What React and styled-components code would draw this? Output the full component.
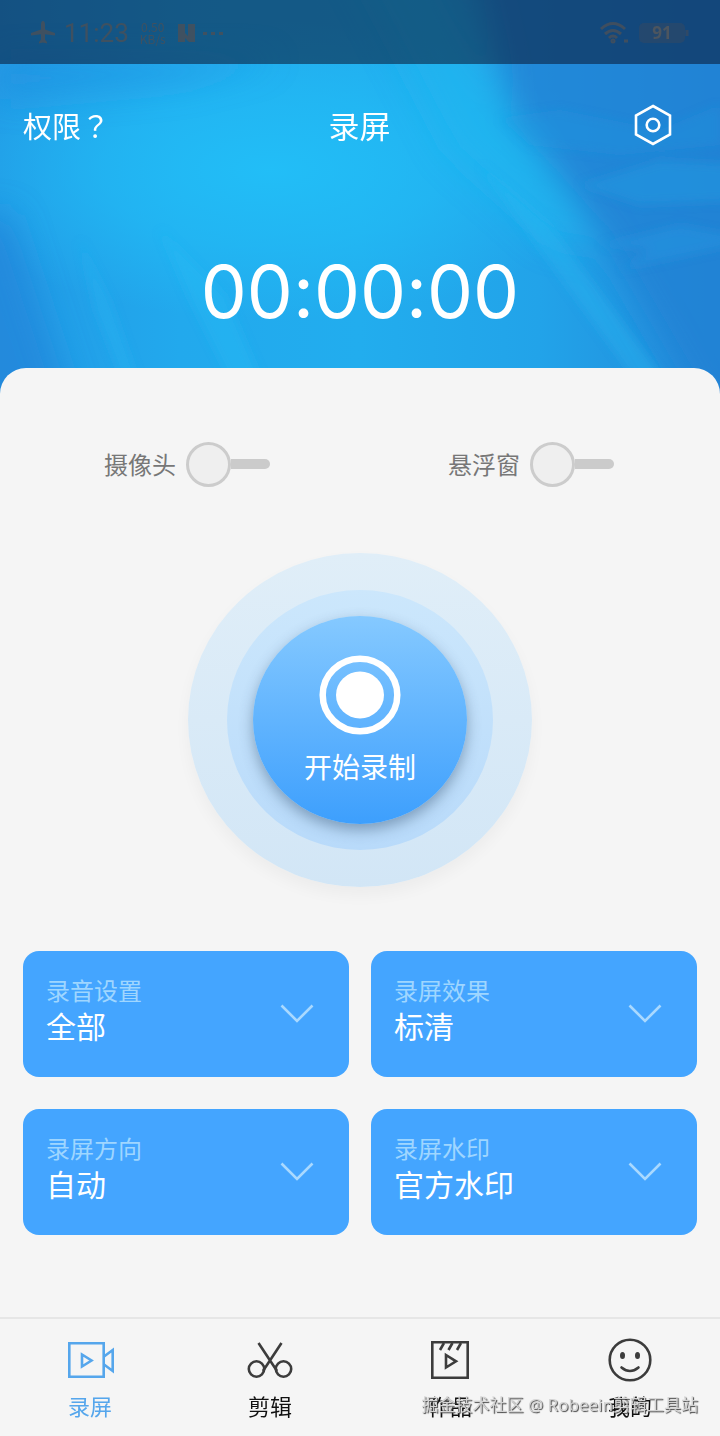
import { useState } from "react";
import styled, { createGlobalStyle } from "styled-components";

const GlobalStyle = createGlobalStyle`
  *, *::before, *::after {
    box-sizing: border-box;
  }
  body {
    margin: 0;
    background-color: #f5f5f5;
    font-family: "Noto Sans CJK SC", "Noto Sans", sans-serif;
  }
  button {
    padding: 0;
    border: none;
    background: none;
    color: inherit;
    font: inherit;
    cursor: pointer;
  }
`

const Page = styled.div`
  min-height: 100vh;
  display: flex;
  flex-direction: column;
  position: relative;
`

const Sea = styled.svg`
  position: absolute;
  top: 0;
  left: 0;
  width: 100%;
  height: 400px;
`

const StatusBar = styled.div`
  position: relative;
  height: 64px;
  padding: 2px 30px 0;
  display: flex;
  align-items: center;
  justify-content: space-between;
  background-color: rgba(10, 22, 50, 0.55);
  color: #4a5058;
`

const StatusGroup = styled.div`
  display: flex;
  align-items: center;
  gap: 8px;
  opacity: 0.8;
`

const Clock = styled.span`
  font-family: Roboto, sans-serif;
  font-size: 26px;
  line-height: 32px;
`

const NetSpeed = styled.span`
  width: 32px;
  font-size: 12px;
  line-height: 12px;
  text-align: center;
`

const Header = styled.header`
  position: relative;
  height: 124px;
  padding: 0 48px 2px 23px;
  display: grid;
  grid-template-columns: 1fr auto 1fr;
  align-items: center;
  color: #fff;
`

const HeaderLink = styled.button`
  && {
    justify-self: start;
    font-family: "Noto Sans CJK TC", sans-serif;
    font-size: 29px;
    line-height: 40px;
  }
`

const Title = styled.h1`
  margin: 0;
  padding-left: 24px;
  font-size: 31px;
  font-weight: 400;
  line-height: 40px;
`

const SettingButton = styled.button`
  justify-self: end;
  display: flex;
`

const Timer = styled.time`
  position: relative;
  height: 180px;
  padding-top: 52px;
  color: #fff;
  font-family: Inter, sans-serif;
  font-size: 73px;
  font-variant-ligatures: no-contextual;
  line-height: 104px;
  text-align: center;
`

const Panel = styled.main`
  position: relative;
  flex: 1;
  padding: 64px 23px 82px;
  border-radius: 26px 26px 0 0;
  background-color: #f5f5f5;
`

const SwitchRow = styled.div`
  padding: 0 9px 0 7px;
  display: grid;
  grid-template-columns: 1fr 1fr;
  column-gap: 30px;
`

const SwitchLabel = styled.label`
  display: flex;
  align-items: center;
  justify-content: center;
  gap: 10px;
  color: #777;
  font-size: 24px;
  line-height: 32px;
`

const Switch = styled.input`
  appearance: none;
  width: 84px;
  height: 64px;
  margin: 0;
  display: flex;
  align-items: center;
  cursor: pointer;

  &::before {
    content: "";
    width: 45px;
    height: 45px;
    border: 3px solid #ccc;
    border-radius: 50%;
    background-color: #efefef;
  }
  &::after {
    content: "";
    flex: 1;
    height: 10px;
    border-radius: 0 5px 5px 0;
    background-color: #cbcbcb;
  }
  &:checked {
    flex-direction: row-reverse;
  }
  &:checked::before {
    border-color: #44a5ff;
  }
`

const Outer = styled.div`
  width: 344px;
  height: 334px;
  margin: 57px auto 64px;
  display: flex;
  align-items: center;
  justify-content: center;
  border-radius: 50%;
  background: linear-gradient(#e0eef8, #d2e6f6);
  box-shadow: 0 8px 16px rgba(0, 0, 0, 0.04);
`

const Inner = styled.div`
  width: 266px;
  height: 260px;
  display: flex;
  align-items: center;
  justify-content: center;
  border-radius: 50%;
  background: linear-gradient(#cce7fc, #b8dafa);
`

const RecordButton = styled.button`
  && {
    width: 214px;
    height: 208px;
    display: flex;
    flex-direction: column;
    align-items: center;
    justify-content: center;
    gap: 11px;
    border-radius: 50%;
    background: linear-gradient(#85c9ff, #3d9ffd);
    box-shadow: 0 6px 14px rgba(50, 80, 110, 0.45);
    color: #fff;
    font-size: 28px;
    line-height: 40px;
  }
`

const Cards = styled.div`
  display: grid;
  grid-template-columns: 1fr 1fr;
  gap: 32px 22px;
`

const Card = styled.button`
  && {
    height: 126px;
    padding: 0 35px 0 23px;
    display: flex;
    align-items: center;
    justify-content: space-between;
    border-radius: 16px;
    background-color: #44a5ff;
    text-align: left;
  }
`

const CardText = styled.span`
  padding-bottom: 10px;
`

const CardName = styled.span`
  display: block;
  color: #9fd6ff;
  font-size: 24px;
  line-height: 32px;
`

const CardValue = styled.span`
  display: block;
  color: #fff;
  font-size: 30px;
  line-height: 38px;
`

const TabBar = styled.nav`
  position: relative;
  height: 120px;
  display: grid;
  grid-template-columns: repeat(4, 1fr);
  border-top: 2px solid #e6e6e6;
`

const Tab = styled.a`
  padding-top: 17px;
  display: flex;
  flex-direction: column;
  align-items: center;
  gap: 5px;
  color: ${(props) => (props.$active ? "#55a6ec" : "#111")};
  font-size: 22px;
  line-height: 32px;
  text-decoration: none;

  svg {
    color: ${(props) => (props.$active ? "#55a6ec" : "#3c3c3c")};
  }
`

const Watermark = styled.span`
  position: absolute;
  right: 22px;
  bottom: 16px;
  color: #d4d4d4;
  font-family: "Noto Sans", "Noto Sans CJK SC", sans-serif;
  font-size: 17px;
  line-height: 32px;
  text-shadow: 1px 1px 1px #444;
  pointer-events: none;
`

const SeaBackground = () => (
  <Sea viewBox="0 0 720 400" preserveAspectRatio="none" aria-hidden="true">
    <defs>
      <linearGradient id="base" x1="0" y1="0" x2="1" y2="0">
        <stop offset="0" stopColor="#229ae5" />
        <stop offset="0.25" stopColor="#22a9ed" />
        <stop offset="0.5" stopColor="#22adee" />
        <stop offset="0.75" stopColor="#22a3e9" />
        <stop offset="1" stopColor="#228bda" />
      </linearGradient>
      <radialGradient id="glow">
        <stop offset="0" stopColor="#22c0f8" stopOpacity="0.9" />
        <stop offset="0.5" stopColor="#22bdf6" stopOpacity="0.6" />
        <stop offset="1" stopColor="#22bbf5" stopOpacity="0" />
      </radialGradient>
      <filter id="soft" filterUnits="userSpaceOnUse" x="-100" y="-100" width="920" height="600">
        <feGaussianBlur stdDeviation="16" />
      </filter>
      <filter id="ripple" filterUnits="userSpaceOnUse" x="-100" y="-100" width="920" height="600">
        <feGaussianBlur stdDeviation="5" />
      </filter>
    </defs>
    <rect width="720" height="400" fill="url(#base)" />
    <ellipse cx="270" cy="170" rx="340" ry="150" fill="url(#glow)" />
    <g filter="url(#soft)">
      <path d="M470 -60H780V460H730L600 235L510 115Z" fill="#2280d3" opacity="0.75" />
      <path d="M-60 215L10 215L90 460H-60Z" fill="#2283d8" opacity="0.7" />
      <path d="M0 60H280L180 84L0 100Z" fill="#2390df" opacity="0.5" />
      <path d="M340 -60H420L510 110L600 250L550 240L450 150Z" fill="#22b8f0" opacity="0.6" />
    </g>
    <g filter="url(#ripple)">
      <path d="M500 118L560 110L660 130L720 105V145L620 155L530 145Z" fill="#2597e2" opacity="0.3" />
      <path d="M580 185L660 160L760 165V200L640 205Z" fill="#2499e2" opacity="0.5" />
      <path d="M600 245L680 225L760 240L620 270L650 250Z" fill="#249ae3" opacity="0.4" />
      <path d="M480 165L550 225L680 400H650L540 250Z" fill="#2abaf3" opacity="0.35" />
      <path d="M160 230L225 295L270 400H240L190 300Z" fill="#25bbf5" opacity="0.4" />
      <path d="M80 240L110 300L145 400H130L95 310Z" fill="#25b4f2" opacity="0.4" />
    </g>
  </Sea>
)

const PlaneIcon = () => (
  <svg width="26" height="26" viewBox="0 0 26 26" fill="currentColor" aria-hidden="true">
    <path d="M13 1c-1.300 0-2 1.500-2 3.200V9.500L1 13v2.500l10-1.300v5.300l-2 2.500v1.500l4-1 4 1V22l-2-2.500v-5.300l10 1.300V13L15 9.500V4.200C15 2.500 14.300 1 13 1z" />
  </svg>
)

const NoticeIcons = () => (
  <svg width="50" height="20" viewBox="0 0 50 20" fill="currentColor" aria-hidden="true">
    <path d="M1 1H8V10L11 13V1H18V19H12L8 15V19H1ZM26 9h4v3h-4zM34 9h4v3h-4zM42 9h4v3h-4z" />
  </svg>
)

const WifiIcon = () => (
  <svg width="30" height="24" viewBox="0 0 30 24" fill="none" stroke="currentColor" strokeWidth="3" aria-hidden="true">
    <path d="M1 8q12-11 24 0M5 13q8-7 16 0M9 17q4-4 8 0" />
    <circle cx="13" cy="20" r="1" />
    <path d="M24 20h4" />
  </svg>
)

const BatteryIcon = () => (
  <svg width="52" height="24" viewBox="0 0 52 24" aria-hidden="true">
    <rect x="1" y="2" width="46" height="20" rx="5" fill="#384a60" opacity="0.6" />
    <path d="M49 9v6" stroke="#384a60" strokeWidth="3" />
    <text x="24" y="18" fill="#5a5957" fontFamily="Noto Sans" fontSize="17" fontWeight="700" textAnchor="middle">91</text>
  </svg>
)

const GearIcon = () => (
  <svg width="38" height="42" viewBox="0 0 38 42" fill="none" stroke="#fff" strokeWidth="2.600" aria-hidden="true">
    <path d="M19 2L36 11.500V30.500L19 40L2 30.500V11.500Z" />
    <circle cx="19" cy="21" r="6.300" />
  </svg>
)

const TargetIcon = () => (
  <svg width="82" height="80" viewBox="0 0 82 80" aria-hidden="true">
    <ellipse cx="41" cy="40" rx="37.300" ry="36.300" fill="none" stroke="#fff" strokeWidth="6.500" />
    <ellipse cx="41" cy="40" rx="24" ry="23.500" fill="#fff" />
  </svg>
)

const ArrowIcon = () => (
  <svg width="34" height="20" viewBox="0 0 34 20" fill="none" stroke="#a9d9ff" strokeWidth="2.600" aria-hidden="true">
    <path d="M1.500 1.500L17 17L32.500 1.500" />
  </svg>
)

const VideoIcon = () => (
  <svg width="48" height="48" viewBox="0 0 48 48" fill="none" stroke="currentColor" strokeWidth="2.600" aria-hidden="true">
    <path d="M3.300 7.300H37.700V40.700H3.300Z" />
    <path d="M16 18.500V30.500L25.500 24.500Z" />
    <path d="M38 20.500L46.700 14V35L38 28.500" />
  </svg>
)

const ScissorsIcon = () => (
  <svg width="48" height="48" viewBox="0 0 48 48" fill="none" stroke="currentColor" strokeWidth="2.600" aria-hidden="true">
    <path d="M12.500 7L31 35M35.500 7L17 35" />
    <circle cx="10.500" cy="33" r="7.700" />
    <circle cx="37.500" cy="33" r="7.700" />
  </svg>
)

const WorksIcon = () => (
  <svg width="48" height="48" viewBox="0 0 48 48" fill="none" stroke="currentColor" strokeWidth="2.600" aria-hidden="true">
    <path d="M6.300 6.300H41.700V41.700H6.300Z" />
    <path d="M18 7L14 14M26.500 7L22.500 14M35 7L31 14" />
    <path d="M20 19V31.500L30 25.300Z" />
  </svg>
)

const SmileIcon = () => (
  <svg width="48" height="48" viewBox="0 0 48 48" fill="none" stroke="currentColor" strokeWidth="2.600" aria-hidden="true">
    <circle cx="24" cy="24" r="20.300" />
    <path d="M15.500 31.500Q24 38.500 32.500 31.500" strokeLinecap="round" />
    <ellipse cx="16.500" cy="19.500" rx="2.500" ry="3.500" fill="currentColor" stroke="none" />
    <ellipse cx="31.500" cy="19.500" rx="2.500" ry="3.500" fill="currentColor" stroke="none" />
  </svg>
)

const cards = [
  { name: "录音设置", value: "全部" },
  { name: "录屏效果", value: "标清" },
  { name: "录屏方向", value: "自动" },
  { name: "录屏水印", value: "官方水印" },
]

const tabs = [
  { id: "record", name: "录屏", Icon: VideoIcon },
  { id: "edit", name: "剪辑", Icon: ScissorsIcon },
  { id: "works", name: "作品", Icon: WorksIcon },
  { id: "mine", name: "我的", Icon: SmileIcon },
]

const App = () => {
  const [tab, setTab] = useState("record")

  return (
    <Page>
      <GlobalStyle />
      <SeaBackground />
      <StatusBar>
        <StatusGroup>
          <PlaneIcon />
          <Clock>11:23</Clock>
          <NetSpeed>0.50 KB/s</NetSpeed>
          <NoticeIcons />
        </StatusGroup>
        <StatusGroup>
          <WifiIcon />
          <BatteryIcon />
        </StatusGroup>
      </StatusBar>
      <Header>
        <HeaderLink type="button">权限？</HeaderLink>
        <Title>录屏</Title>
        <SettingButton type="button" aria-label="设置">
          <GearIcon />
        </SettingButton>
      </Header>
      <Timer>00:00:00</Timer>
      <Panel>
        <SwitchRow>
          <SwitchLabel>
            摄像头
            <Switch type="checkbox" role="switch" />
          </SwitchLabel>
          <SwitchLabel>
            悬浮窗
            <Switch type="checkbox" role="switch" />
          </SwitchLabel>
        </SwitchRow>
        <Outer>
          <Inner>
            <RecordButton type="button">
              <TargetIcon />
              开始录制
            </RecordButton>
          </Inner>
        </Outer>
        <Cards>
          {cards.map((card) => (
            <Card key={card.name} type="button">
              <CardText>
                <CardName>{card.name}</CardName>
                <CardValue>{card.value}</CardValue>
              </CardText>
              <ArrowIcon />
            </Card>
          ))}
        </Cards>
      </Panel>
      <TabBar>
        {tabs.map(({ id, name, Icon }) => (
          <Tab key={id} href={`#${id}`} $active={tab === id} onClick={() => setTab(id)}>
            <Icon />
            {name}
          </Tab>
        ))}
        <Watermark>掘金技术社区 @ Robeein剪辑工具站</Watermark>
      </TabBar>
    </Page>
  )
}

export default App;
